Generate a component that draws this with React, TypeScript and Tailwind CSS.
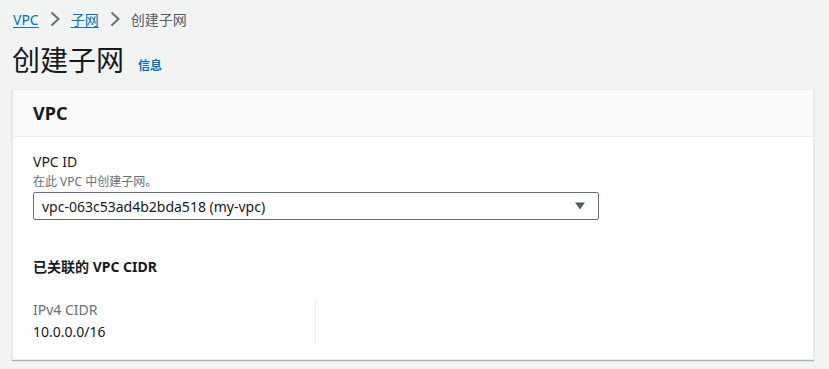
export default function App() {
    const chevron = (
        <svg width="16" height="16" viewBox="0 0 16 16" className="mx-[8px] text-[#687078]">
            <path d="M4.5 1.5l7 6.5-7 6.5" fill="none" stroke="currentColor" strokeWidth="2" />
        </svg>
    );

    return (
        <div className="min-h-screen bg-[#f2f3f3] px-[12px] pt-[9px] text-[#16191f]" style={{ fontFamily: '"Noto Sans", "Noto Sans CJK SC", sans-serif' }}>
            {/* breadcrumbs */}
            <nav className="flex items-center h-[20px] text-[14px] px-px">
                <a className="text-[#0073bb] underline underline-offset-2">VPC</a>
                {chevron}
                <a className="text-[#0073bb] underline underline-offset-2">子网</a>
                {chevron}
                <span className="text-[#545b64]">创建子网</span>
            </nav>

            <div className="flex items-end mt-[13px] h-[36px]">
                <h1 className="text-[28px] leading-[36px] font-normal">创建子网</h1>
                <span className="ml-[14px] mb-[3px] text-[12px] font-bold text-[#0073bb]">信息</span>
            </div>

            <div className="mt-[11px] w-[802px] bg-white border border-[#eaeded] shadow-[0_1px_1px_0_rgba(0,28,36,0.3)]">
                <div className="bg-[#fafafa] border-b border-[#eaeded] h-[47px] flex items-center px-[20px]">
                    <h2 className="text-[18px] font-bold">VPC</h2>
                </div>

                <div className="px-[20px] pt-[15px] pb-[16px]">
                    <div className="text-[14px] leading-[20px]">VPC ID</div>
                    <div className="text-[12px] leading-[16px] text-[#687078] mt-[2px]">在此 VPC 中创建子网。</div>
                    <div className="mt-[2px] w-[566px] h-[28px] border border-[#687078] rounded-[2px] flex items-center justify-between pl-[8px] pr-[12px]">
                        <span className="text-[14px]">vpc-063c53ad4b2bda518 (my-vpc)</span>
                        <svg width="12" height="10" viewBox="0 0 12 10" className="text-[#545b64]">
                            <path d="M1 1.5h10L6 8.5z" fill="currentColor" />
                        </svg>
                    </div>

                    <h3 className="mt-[37px] text-[14px] leading-[20px] font-bold">已关联的 VPC CIDR</h3>

                    <div className="mt-[23px] grid grid-cols-[283px_1fr]">
                        <div className="border-r border-[#eaeded] h-[43px]">
                            <div className="text-[14px] leading-[20px] text-[#687078]">IPv4 CIDR</div>
                            <div className="text-[14px] leading-[20px] mt-[2px]">10.0.0.0/16</div>
                        </div>
                        <div />
                    </div>
                </div>
            </div>
        </div>
    );
}
